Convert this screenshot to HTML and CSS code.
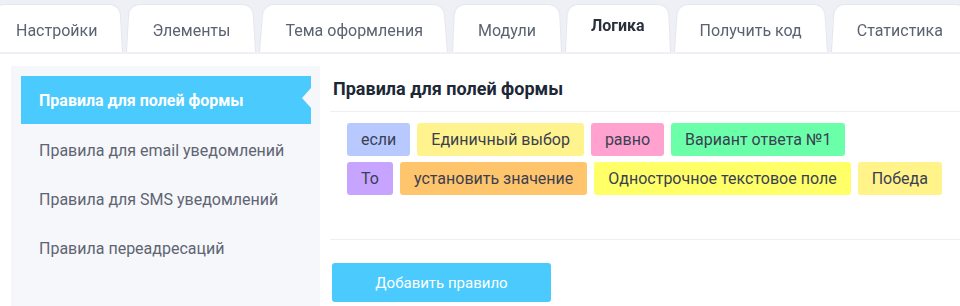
FILE: index.html
```html
<!DOCTYPE html>
<html lang="ru">
<head>
<meta charset="utf-8">
<title>Логика</title>
<link rel="stylesheet" href="styles.css">
</head>
<body>
<nav class="tabs">
  <div class="tab">Настройки</div>
  <div class="tab">Элементы</div>
  <div class="tab">Тема оформления</div>
  <div class="tab">Модули</div>
  <div class="tab tab-active">Логика</div>
  <div class="tab">Получить код</div>
  <div class="tab">Статистика</div>
</nav>
<div class="main">
  <aside class="side">
    <div class="side-item side-active">Правила для полей формы</div>
    <div class="side-item">Правила для email уведомлений</div>
    <div class="side-item">Правила для SMS уведомлений</div>
    <div class="side-item">Правила переадресаций</div>
  </aside>
  <section class="content">
    <h2 class="title">Правила для полей формы</h2>
    <div class="rules">
      <div class="rule-row">
        <span class="tag tag-if">если</span>
        <span class="tag tag-field">Единичный выбор</span>
        <span class="tag tag-eq">равно</span>
        <span class="tag tag-val">Вариант ответа №1</span>
      </div>
      <div class="rule-row">
        <span class="tag tag-then">То</span>
        <span class="tag tag-action">установить значение</span>
        <span class="tag tag-target">Однострочное текстовое поле</span>
        <span class="tag tag-result">Победа</span>
      </div>
    </div>
    <div class="actions">
      <button class="btn">Добавить правило</button>
    </div>
  </section>
</div>
</body>
</html>
```

FILE: styles.css
```css
html, body {
  margin: 0;
  padding: 0;
  background: #ffffff;
  font-family: Roboto, "Noto Sans", "Liberation Sans", sans-serif;
  overflow: hidden;
}

.tabs {
  display: flex;
  align-items: flex-end;
  gap: 3px;
  height: 54px;
  box-sizing: border-box;
  padding-top: 2px;
  padding-bottom: 2px;
  margin-left: -10px;
  background: #eef0f5;
  white-space: nowrap;
}

.tab {
  position: relative;
  z-index: 0;
  flex: none;
  height: 50px;
  box-sizing: border-box;
  padding: 7px 26px 0;
  display: flex;
  align-items: center;
  font-size: 16px;
  color: #5b6270;
}

.tab::before {
  content: "";
  position: absolute;
  inset: 0;
  z-index: -1;
  background: #ffffff;
  border: 1px solid #e4e7ed;
  border-bottom: none;
  border-radius: 11px 11px 0 0;
  transform: perspective(40px) rotateX(2deg);
  transform-origin: bottom center;
}

.tab-active {
  font-weight: 700;
  color: #2a313d;
  padding-top: 0;
  padding-bottom: 4px;
}

.main {
  display: flex;
  margin-top: 12px;
}

.side {
  flex: none;
  width: 309px;
  height: 240px;
  margin-left: 11px;
  box-sizing: border-box;
  padding: 10px 9px 10px 10px;
  background: #f5f7fb;
}

.side-item {
  position: relative;
  height: 49px;
  padding-left: 18px;
  display: flex;
  align-items: center;
  font-size: 16px;
  color: #5f6472;
}

.side-active {
  height: 48px;
  background: #4bcafd;
  color: #ffffff;
  font-weight: 700;
  margin-bottom: 2px;
}

.side-active::after {
  content: "";
  position: absolute;
  right: 0;
  top: 12px;
  border-right: 9px solid #f5f7fb;
  border-top: 10px solid transparent;
  border-bottom: 10px solid transparent;
}

.content {
  flex: 1;
  padding-left: 10px;
}

.title {
  margin: 0;
  padding: 13px 0 12px 3px;
  font-size: 18px;
  line-height: 20px;
  font-weight: 700;
  color: #1d2836;
  border-bottom: 1px solid #eef0f3;
}

.rules {
  display: flex;
  flex-direction: column;
  gap: 6px;
  padding: 11px 0 44px 17px;
  border-bottom: 1px solid #eef0f3;
}

.rule-row {
  display: flex;
  gap: 7px;
}

.tag {
  height: 33px;
  line-height: 33px;
  padding: 0 14px;
  border-radius: 3px;
  font-size: 16px;
  color: #3a4051;
  white-space: nowrap;
}

.tag-if { background: #b8c9ff; }
.tag-field { background: #fff38e; }
.tag-eq { background: #ffa2d0; }
.tag-val { background: #6cffaa; }
.tag-then { background: #c7a4ff; }
.tag-action { background: #ffc56c; }
.tag-target { background: #ffff68; }
.tag-result { background: #fff38a; }

.actions {
  padding: 23px 0 0 2px;
}

.btn {
  width: 219px;
  height: 39px;
  border: none;
  border-radius: 3px;
  background: #4bcafd;
  color: #ffffff;
  font-family: Roboto, "Noto Sans", "Liberation Sans", sans-serif;
  font-size: 15px;
  cursor: pointer;
}
```
